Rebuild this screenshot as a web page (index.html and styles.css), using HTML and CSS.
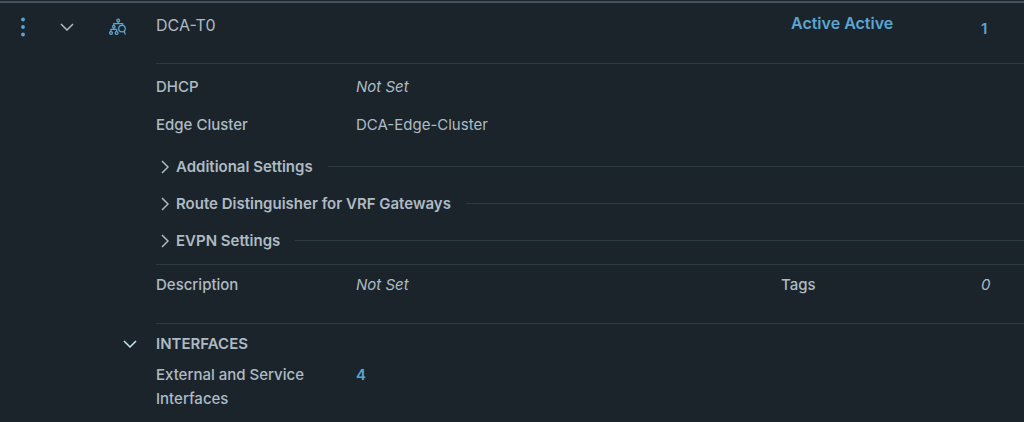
FILE: index.html
```
<!DOCTYPE html>
<html lang="en">
<head>
    <meta charset="UTF-8">
    <meta name="viewport" content="width=device-width, initial-scale=1.0">
    <title>Tier-0 Gateways</title>
    <link rel="stylesheet" href="styles.css">
</head>
<body>
    <main class="gateway">
        <header class="gateway-header">
            <button class="icon-button menu" aria-label="Actions">
                <svg width="6" height="20" viewBox="0 0 6 20" fill="currentColor">
                    <circle cx="3" cy="2.5" r="1.9"/>
                    <circle cx="3" cy="10" r="1.9"/>
                    <circle cx="3" cy="17.5" r="1.9"/>
                </svg>
            </button>
            <button class="icon-button toggle" aria-label="Collapse DCA-T0">
                <svg width="14" height="8" viewBox="0 0 14 8" class="stroke"><path d="M1 1l6 6 6-6"/></svg>
            </button>
            <svg class="type-icon stroke" width="18" height="18" viewBox="0 0 18 18">
                <circle cx="9.2" cy="2.5" r="1.4"/>
                <circle cx="4.8" cy="8.6" r="1.2"/>
                <circle cx="2" cy="15" r="1.4"/>
                <circle cx="7.6" cy="15" r="1.4"/>
                <circle cx="13" cy="10.6" r="3.3"/>
                <path d="M9.2 3.9v2M4.8 7.4V5.7h8.8v1.6M4.8 9.8v1.7M2 13.6v-2.2h5.6v2.2M15 13.2l1.4 3.2"/>
            </svg>
            <h1 class="name">DCA-T0</h1>
            <a class="ha-mode" href="#">Active Active</a>
            <a class="count" href="#">1</a>
        </header>

        <section class="details general">
            <dl class="row">
                <dt>DHCP</dt>
                <dd class="unset">Not Set</dd>
            </dl>
            <dl class="row">
                <dt>Edge Cluster</dt>
                <dd>DCA-Edge-Cluster</dd>
            </dl>
            <div class="groups">
                <button class="group">
                    <svg width="8" height="14" viewBox="0 0 8 14" class="stroke"><path d="M1 1l6 6-6 6"/></svg>
                    Additional Settings
                </button>
                <button class="group">
                    <svg width="8" height="14" viewBox="0 0 8 14" class="stroke"><path d="M1 1l6 6-6 6"/></svg>
                    Route Distinguisher for VRF Gateways
                </button>
                <button class="group">
                    <svg width="8" height="14" viewBox="0 0 8 14" class="stroke"><path d="M1 1l6 6-6 6"/></svg>
                    EVPN Settings
                </button>
            </div>
        </section>

        <section class="details summary">
            <dl class="row">
                <dt>Description</dt>
                <dd class="unset">Not Set</dd>
                <dt>Tags</dt>
                <dd class="unset">0</dd>
            </dl>
        </section>

        <section class="details">
            <h2 class="section-title">
                <button class="icon-button section-toggle" aria-label="Collapse interfaces">
                    <svg width="14" height="8" viewBox="0 0 14 8" class="stroke"><path d="M1 1l6 6 6-6"/></svg>
                </button>
                INTERFACES
            </h2>
            <dl class="row interfaces">
                <dt>External and Service Interfaces</dt>
                <dd><a href="#">4</a></dd>
            </dl>
        </section>
    </main>
</body>
</html>
```
FILE: styles.css
```
* {
    box-sizing: border-box;
}

body {
    margin: 0;
    font-family: Metropolis, Inter, sans-serif;
    font-size: 15px;
    line-height: 24px;
    background-color: #1c242b;
    color: #adbbc4;
}

h1, h2, dl, dd {
    margin: 0;
    font-size: inherit;
    font-weight: 400;
}

a {
    color: #5aa6d2;
    font-weight: 600;
    text-decoration: none;
}

button {
    padding: 0;
    border: none;
    background: none;
    color: inherit;
    font: inherit;
    cursor: pointer;
}

svg {
    display: block;
    flex: none;
}

.stroke {
    fill: none;
    stroke: currentColor;
    stroke-width: 1.5;
}

.type-icon {
    stroke-width: 1.3;
    color: #5aa6d2;
}

.gateway {
    margin-top: 1px;
    border-top: 2px solid #44545f;
}

.gateway-header {
    display: grid;
    grid-template-columns: 45px 64px 47px 1fr 190px 43px;
    height: 60px;
    padding-top: 10px;
    align-items: start;
    font-size: 16px;
}

.icon-button {
    display: flex;
    align-items: center;
    height: 28px;
}

.menu {
    justify-content: center;
    color: #5aa6d2;
}

.toggle {
    padding-left: 15px;
}

.type-icon {
    margin-top: 5px;
}

.ha-mode {
    line-height: 20px;
}

.count {
    padding-top: 4px;
    font-size: 15px;
}

.details {
    margin-left: 156px;
    border-top: 1px solid #2c3a43;
}

.general {
    padding: 4px 0 5px;
}

.row {
    display: grid;
    grid-template-columns: 200px 1fr 200px 43px;
    min-height: 38px;
    align-items: center;
}

dt {
    font-weight: 500;
}

.unset {
    font-style: italic;
}

.groups {
    padding-top: 4px;
}

.group {
    display: flex;
    align-items: center;
    width: 100%;
    height: 37px;
    padding-left: 5px;
    font-weight: 600;
    gap: 7px;
}

.group::after {
    content: "";
    flex: 1;
    height: 1px;
    margin-left: 8px;
    background-color: #2c3a43;
}

.summary {
    padding: 1px 0 19px;
}

.section-title {
    display: flex;
    align-items: center;
    height: 39px;
    margin-left: -33px;
    font-weight: 600;
}

.section-toggle {
    width: 33px;
    color: #c5e4ee;
}

.interfaces {
    align-items: start;
}

.interfaces dt {
    padding-right: 40px;
}
```
